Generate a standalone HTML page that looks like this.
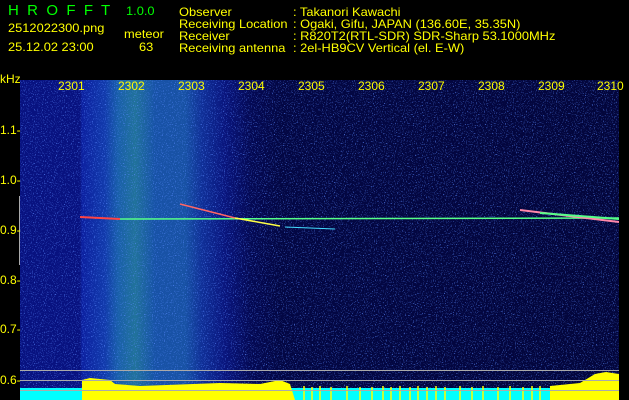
<!DOCTYPE html><html><head><style>
body{margin:0;width:629px;height:400px;background:#000;overflow:hidden;position:relative;font-family:"Liberation Sans",sans-serif;}
.t{position:absolute;color:#ff0;font-size:12px;line-height:12px;white-space:pre;transform:scaleX(1.07);transform-origin:left top}
.g{color:#0f0}
#sp{position:absolute;left:20px;top:80px;width:599px;height:320px;
background:
linear-gradient(90deg,rgba(0,0,0,0) 0,rgba(0,0,0,0) 60px,rgba(20,60,220,.35) 62px,rgba(30,110,230,.45) 85px,rgba(40,160,210,.55) 98px,rgba(50,180,180,.6) 115px,rgba(40,150,220,.5) 135px,rgba(40,150,220,.5) 165px,rgba(30,100,220,.4) 182px,rgba(20,50,200,.25) 205px,rgba(0,0,0,0) 230px),
linear-gradient(90deg,#081280 0,#081280 60px,#060c66 200px,#030744 260px,#03063c 599px);}
#n{position:absolute;left:0;top:0;width:599px;height:320px}
.yl{position:absolute;left:16px;color:#ff0;font-size:12px}
.hl{position:absolute;left:20px;width:599px;height:1px;background:#aaa}
</style></head><body>
<div class="t g" style="left:8px;top:3px;font-size:15px;line-height:15px;transform:none">H  R  O  F  F  T</div>
<div class="t g" style="left:126px;top:5px">1.0.0</div>
<div class="t" style="left:8px;top:22px">2512022300.png</div>
<div class="t" style="left:124px;top:28px">meteor</div>
<div class="t" style="left:8px;top:41px">25.12.02 23:00</div>
<div class="t" style="left:139px;top:41px">63</div>
<div class="t" style="left:179px;top:6px">Observer
Receiving Location
Receiver
Receiving antenna</div>
<div class="t" style="left:293px;top:6px">: Takanori Kawachi
: Ogaki, Gifu, JAPAN (136.60E, 35.35N)
: R820T2(RTL-SDR) SDR-Sharp 53.1000MHz
: 2el-HB9CV Vertical (el. E-W)</div>
<div class="t" style="left:0;top:73px;transform:none">kHz</div>
<div id="sp">
<svg id="n" width="599" height="320"><filter id="f" x="0" y="0" width="100%" height="100%"><feTurbulence type="fractalNoise" baseFrequency="0.9" numOctaves="1" seed="3"/><feColorMatrix values="0 0 0 0 0.1  0 0 0 0 0.25  0 0 0 0 1  4 0 0 0 -2.3"/></filter><rect width="599" height="320" filter="url(#f)"/></svg>
<svg style="position:absolute;left:0;top:0" width="599" height="320">
<path d="M60 137 L100 139" stroke="#f44" stroke-width="2"/>
<path d="M100 139 L599 138" stroke="#5f8" stroke-width="1.5"/>
<path d="M160 124 L215 138" stroke="#f66" stroke-width="1.5"/>
<path d="M215 138 L260 146" stroke="#ff4" stroke-width="1.5"/>
<path d="M265 147 L315 149" stroke="#4df" stroke-width="1"/>
<path d="M500 130 L599 142" stroke="#f8a" stroke-width="2"/>
<path d="M520 133 L599 139" stroke="#5f8" stroke-width="2"/>
<rect x="0" y="308" width="599" height="12" fill="#0ff"/>
<polygon points="62,300 70,298 90,300 95,304 120,306 200,303 240,304 260,300 270,304 275,320 62,320" fill="#ff0"/>
<polygon points="530,306 560,303 575,294 586,292 599,294 599,320 530,320" fill="#ff0"/>
<g stroke="#ff0" stroke-width="1.5">
<path d="M284 306V320M292 307V320M300 306V320M311 307V320M327 306V320M340 307V320M352 307V320M363 306V320M371 307V320M380 306V320M390 307V320M398 306V320M407 307V320M416 306V320M425 307V320M440 306V320M452 307V320M463 306V320M478 307V320M490 306V320M503 307V320M512 306V320M520 306V320"/>
</g>
</svg>
</div>
<div class="hl" style="top:370px"></div><div class="hl" style="top:380px"></div><div class="hl" style="top:390px"></div>
<div style="position:absolute;left:19px;top:196px;width:1px;height:69px;background:#aaa"></div>
<div class="yl" style="top:123px;left:0">1.1-</div>
<div class="yl" style="top:173px;left:0">1.0-</div>
<div class="yl" style="top:223px;left:0">0.9-</div>
<div class="yl" style="top:273px;left:0">0.8-</div>
<div class="yl" style="top:322px;left:0">0.7-</div>
<div class="yl" style="top:373px;left:0">0.6-</div>
<div class="t" style="left:58px;top:80px;transform:none">2301</div>
<div class="t" style="left:118px;top:80px;transform:none">2302</div>
<div class="t" style="left:178px;top:80px;transform:none">2303</div>
<div class="t" style="left:238px;top:80px;transform:none">2304</div>
<div class="t" style="left:298px;top:80px;transform:none">2305</div>
<div class="t" style="left:358px;top:80px;transform:none">2306</div>
<div class="t" style="left:418px;top:80px;transform:none">2307</div>
<div class="t" style="left:478px;top:80px;transform:none">2308</div>
<div class="t" style="left:538px;top:80px;transform:none">2309</div>
<div class="t" style="left:597px;top:80px;transform:none">2310</div>
</body></html>
